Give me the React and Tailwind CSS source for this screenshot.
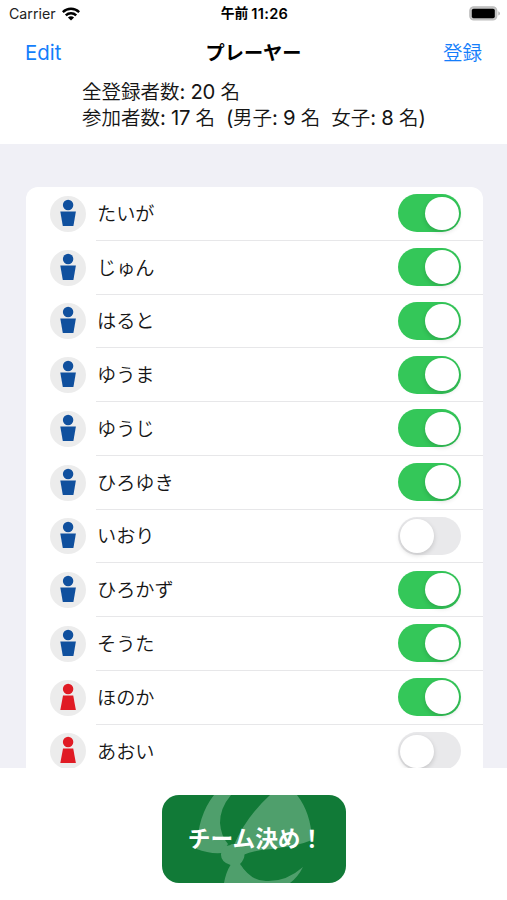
const players = [
  { name: 'たいが', boy: true, on: true },
  { name: 'じゅん', boy: true, on: true },
  { name: 'はると', boy: true, on: true },
  { name: 'ゆうま', boy: true, on: true },
  { name: 'ゆうじ', boy: true, on: true },
  { name: 'ひろゆき', boy: true, on: true },
  { name: 'いおり', boy: true, on: false },
  { name: 'ひろかず', boy: true, on: true },
  { name: 'そうた', boy: true, on: true },
  { name: 'ほのか', boy: false, on: true },
  { name: 'あおい', boy: false, on: false },
];

function Avatar({ boy }) {
  return (
    <svg viewBox="0 0 36 36" className="size-9 shrink-0">
      <circle cx="18" cy="18" r="18" fill="#ececec" />
      <g fill={boy ? '#10509e' : '#e01b24'}>
        <circle cx="18.1" cy="9" r="5.2" />
        <path d={boy ? 'M10.3 15.4H25.9L23.4 29.9H12.8Z' : 'M13 15.4H23.2L25.9 29.9H10.3Z'} />
      </g>
    </svg>
  );
}

function Switch({ on }) {
  return (
    <div
      className={
        'flex h-[38px] w-[62.5px] shrink-0 items-center rounded-full px-[2px] ' +
        (on ? 'justify-end bg-[#34c759]' : 'justify-start bg-[#e9e9eb]')
      }
    >
      <div className="size-[33.5px] rounded-full bg-white shadow-[0_2px_5px_rgba(0,0,0,0.16)]" />
    </div>
  );
}

function Row({ player, last }) {
  return (
    <div className="flex h-[53.75px] shrink-0 pl-[24.5px]">
      <div className="flex w-[46px] items-center">
        <Avatar boy={player.boy} />
      </div>
      <div
        className={
          'flex flex-1 items-center justify-between pr-[22px] ' +
          (last ? '' : 'border-b border-[#e7e7e9]')
        }
      >
        <span className="pt-px pl-px text-[19.2px] leading-6 font-[350] text-[#151515]">{player.name}</span>
        <Switch on={player.on} />
      </div>
    </div>
  );
}

function StatusBar() {
  return (
    <div className="grid h-[27px] grid-cols-[1fr_auto_1fr] items-center pr-[7px] pl-[9px]">
      <div className="flex items-center gap-[6px] pt-px text-[14.2px] leading-none text-[#222]">
        <span>Carrier</span>
        <svg viewBox="0 0 18 14" className="h-[14px] w-[18px]" fill="none" stroke="#000" strokeWidth="2.5">
          <path d="M0.8 5.1A11.8 11.8 0 0 1 17.2 5.1" />
          <path d="M3.8 8.3A7.5 7.5 0 0 1 14.2 8.3" />
          <path d="M9 13.6 5.9 10.6A4.5 4.5 0 0 1 12.1 10.6Z" fill="#000" stroke="none" />
        </svg>
      </div>
      <div className="flex items-center gap-[3px] pt-px text-[14.6px] leading-none font-semibold text-black">
        <span className="text-[13.8px]">午前</span>
        <span className="tracking-[0.3px]">11:26</span>
      </div>
      <svg viewBox="0 0 31 15" className="h-[15px] w-[31px] justify-self-end">
        <rect x="0.8" y="0.8" width="27" height="13.2" rx="4" fill="#c4c4c4" stroke="#bdbdbd" strokeWidth="1.2" />
        <rect x="2.8" y="2.8" width="23" height="9.4" rx="1.8" fill="#000" />
        <path d="M29.3 5.2Q31 6 31 7.4T29.3 9.6Z" fill="#b5b5b5" />
      </svg>
    </div>
  );
}

function Num({ children }) {
  return <span className="text-[20.3px] font-normal tracking-[-0.28px]">{children}</span>;
}

export default function App() {
  return (
    <div className="flex h-[900px] w-[507px] flex-col overflow-hidden bg-white font-['Inter','Noto_Sans_CJK_JP',sans-serif]" lang="ja">
      <StatusBar />
      <header className="grid h-[51px] grid-cols-[1fr_auto_1fr] items-center px-[25px] pt-[2px] text-[19.5px]">
        <span className="text-[20.4px] text-[#147efb]">Edit</span>
        <h1 className="text-[19.2px] font-semibold text-black">プレーヤー</h1>
        <span className="justify-self-end font-[350] text-[#147efb]">登録</span>
      </header>
      <div className="h-[66px] pt-px pl-[82px] text-[19.5px] leading-[25px] font-[350] whitespace-pre text-[#151515]">
        <div>全登録者数<Num>: 20 </Num>名</div>
        <div>参加者数<Num>: 17 </Num>名<Num>  (</Num>男子<Num>: 9 </Num>名<Num>  </Num>女子<Num>: 8 </Num>名<Num>)</Num></div>
      </div>
      <main className="h-[624px] shrink-0 overflow-hidden bg-[#f0f0f6] pr-[24.5px] pl-[25.5px] pt-[43px]">
        <div className="flex flex-col overflow-hidden rounded-t-xl bg-white">
          {players.map((p, i) => (
            <Row key={p.name} player={p} last={i === players.length - 1} />
          ))}
        </div>
      </main>
      <footer className="flex flex-1 justify-center pt-[27px]">
        <button className="grid h-[88px] w-[184px] overflow-hidden rounded-[17px] bg-[#117a37]">
          <svg viewBox="0 0 184 88" className="col-start-1 row-start-1 h-[88px] w-[184px]" fill="#4f9f6c">
            <path d="M52 0H69Q58 13 58 28Q59 41 66 49L60 58Q47 59 34.5 54Q36 20 52 0Z" />
            <path d="M108 0H135Q149 18 150 45Q136 51 110 54Q92 55 81 60L72 50Q84 22 108 0Z" />
            <path d="M62 50Q66 52 70 49Q77 49 82 56Q84 63 78 69Q84 80 97 88H62Q64 77 68.5 70Q59 67 59 60Q59 54 62 50Z" />
            <path d="M78 69Q89 86 104 86Q124 87 141 72Q136 82 128 88H90Q82 80 78 69Z" />
          </svg>
          <span className="col-start-1 row-start-1 self-center justify-self-center pt-px pl-[4px] text-[22.7px] leading-none font-bold whitespace-nowrap text-white">
            チーム決め！
          </span>
        </button>
      </footer>
    </div>
  );
}
